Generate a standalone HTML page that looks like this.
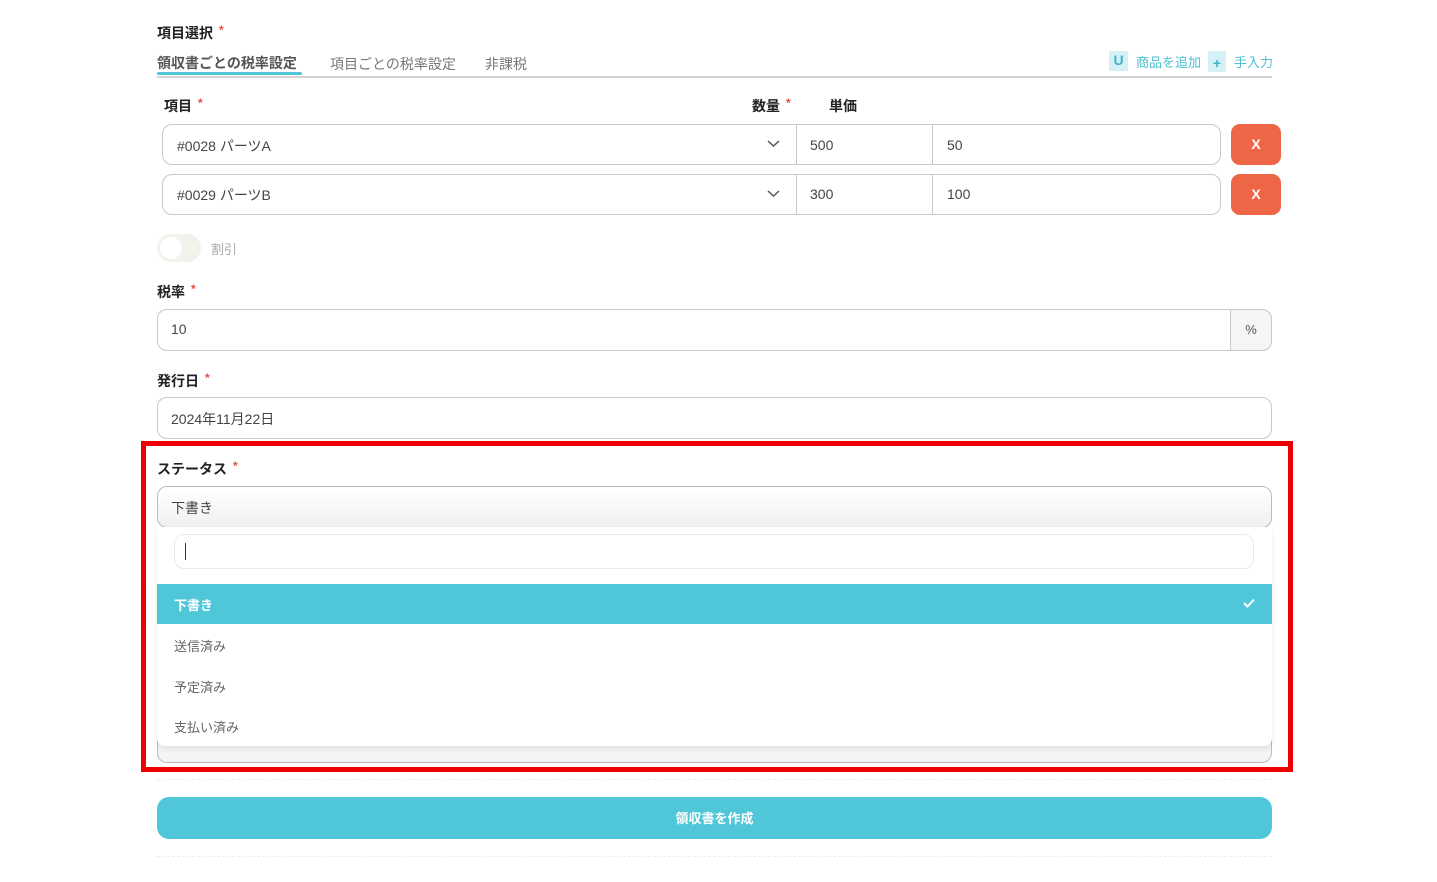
<!DOCTYPE html>
<html><head><meta charset="utf-8"><style>
*{box-sizing:border-box;margin:0;padding:0}
body{width:1437px;height:882px;background:#fff;font-family:"Liberation Sans","Noto Sans CJK JP",sans-serif;color:#333;position:relative;overflow:hidden;font-size:14px}
.a{position:absolute}
.lbl{font-weight:bold;font-size:14px;color:#222}
.req{color:#e74c3c;font-size:12px;margin-left:6px;vertical-align:top}
.box{border:1px solid #c8c8c8;border-radius:10px;background:#fff}
.t{font-size:14px;color:#444}
.xb{background:#ef6646;color:#fff;border-radius:9px;font-weight:bold;text-align:center;line-height:41px;width:50px;height:41px;font-size:14px}
</style></head><body>
<div class="a lbl" style="left:157px;top:23px">項目選択<span class="req">*</span></div>
<div class="a" style="left:157px;top:53px;font-size:14px;color:#555;font-weight:bold">領収書ごとの税率設定</div>
<div class="a" style="left:330px;top:54px;font-size:14px;color:#777">項目ごとの税率設定</div>
<div class="a" style="left:485px;top:54px;font-size:14px;color:#777">非課税</div>
<div class="a" style="left:157px;top:76px;width:1115px;height:2px;background:#d5d5d5"></div>
<div class="a" style="left:157px;top:72px;width:145px;height:3px;background:#4fc7d8;border-radius:2px"></div>
<div class="a" style="left:1109px;top:51px;width:19px;height:20px;background:#d6f1f5;color:#3bb5c9;font-weight:bold;text-align:center;line-height:18px">U</div>
<div class="a" style="left:1136px;top:52px;font-size:13px;color:#4fbfd0">商品を追加</div>
<div class="a" style="left:1208px;top:51px;width:18px;height:21px;background:#d6f1f5;color:#3bb5c9;font-weight:bold;text-align:center;line-height:24px">+</div>
<div class="a" style="left:1234px;top:52px;font-size:13px;color:#4fbfd0">手入力</div>

<div class="a lbl" style="left:164px;top:96px">項目<span class="req">*</span></div>
<div class="a lbl" style="left:752px;top:96px">数量<span class="req">*</span></div>
<div class="a lbl" style="left:829px;top:96px">単価</div>

<div class="a box" style="left:162px;top:124px;width:1059px;height:41px"></div>
<div class="a" style="left:796px;top:124px;width:1px;height:41px;background:#c8c8c8"></div>
<div class="a" style="left:932px;top:124px;width:1px;height:41px;background:#c8c8c8"></div>
<div class="a t" style="left:177px;top:136px">#0028 パーツA</div>
<div class="a t" style="left:810px;top:137px">500</div>
<div class="a t" style="left:947px;top:137px">50</div>
<svg class="a" style="left:767px;top:139px" width="13" height="9"><path d="M1 2l5.5 5 5.5-5" fill="none" stroke="#555" stroke-width="1.5"/></svg>
<div class="a xb" style="left:1231px;top:124px">X</div>

<div class="a box" style="left:162px;top:174px;width:1059px;height:41px"></div>
<div class="a" style="left:796px;top:174px;width:1px;height:41px;background:#c8c8c8"></div>
<div class="a" style="left:932px;top:174px;width:1px;height:41px;background:#c8c8c8"></div>
<div class="a t" style="left:177px;top:185px">#0029 パーツB</div>
<div class="a t" style="left:810px;top:186px">300</div>
<div class="a t" style="left:947px;top:186px">100</div>
<svg class="a" style="left:767px;top:189px" width="13" height="9"><path d="M1 2l5.5 5 5.5-5" fill="none" stroke="#555" stroke-width="1.5"/></svg>
<div class="a xb" style="left:1231px;top:174px">X</div>

<div class="a" style="left:157px;top:234px;width:44px;height:28px;border-radius:14px;background:#f3f1ec"></div>
<div class="a" style="left:160px;top:237px;width:22px;height:22px;border-radius:11px;background:#fff"></div>
<div class="a" style="left:211px;top:239px;font-size:13px;color:#aaa">割引</div>

<div class="a lbl" style="left:157px;top:282px">税率<span class="req">*</span></div>
<div class="a box" style="left:157px;top:309px;width:1115px;height:42px"></div>
<div class="a" style="left:1230px;top:309px;width:42px;height:42px;background:#f5f5f5;border:1px solid #c8c8c8;border-radius:0 10px 10px 0;text-align:center;line-height:40px;font-size:13px;color:#555">%</div>
<div class="a t" style="left:171px;top:321px">10</div>

<div class="a lbl" style="left:157px;top:371px">発行日<span class="req">*</span></div>
<div class="a box" style="left:157px;top:397px;width:1115px;height:42px"></div>
<div class="a t" style="left:171px;top:409px">2024年11月22日</div>

<div class="a lbl" style="left:157px;top:459px">ステータス<span class="req">*</span></div>
<div class="a" style="left:157px;top:486px;width:1115px;height:42px;border:1px solid #bbb;border-radius:10px;background:linear-gradient(#fff,#f0f0f0)"></div>
<div class="a t" style="left:171px;top:498px">下書き</div>
<div class="a" style="left:157px;top:720px;width:1115px;height:43px;border:1px solid #bbb;border-radius:10px;background:#f4f4f4"></div>
<div class="a" style="left:157px;top:527px;width:1115px;height:219px;background:#fff;border-radius:0 0 8px 8px;box-shadow:0 3px 6px rgba(0,0,0,.08)"></div>
<div class="a" style="left:174px;top:534px;width:1080px;height:35px;border:1px solid #eee9e2;border-radius:10px"></div>
<div class="a" style="left:185px;top:543px;width:1px;height:17px;background:#333"></div>
<div class="a" style="left:157px;top:584px;width:1115px;height:40px;background:#4fc7d8"></div>
<div class="a" style="left:174px;top:595px;font-size:13px;color:#fff;font-weight:bold">下書き</div>
<svg class="a" style="left:1243px;top:598px" width="12" height="10"><path d="M1 5l3.5 3.5L11 1.5" fill="none" stroke="#fff" stroke-width="2"/></svg>
<div class="a" style="left:174px;top:636px;font-size:13px;color:#666">送信済み</div>
<div class="a" style="left:174px;top:677px;font-size:13px;color:#666">予定済み</div>
<div class="a" style="left:174px;top:717px;font-size:13px;color:#666">支払い済み</div>

<div class="a" style="left:141px;top:441px;width:1152px;height:331px;border:5px solid #ee0000"></div>

<div class="a" style="left:157px;top:779px;width:1115px;border-top:1px dashed #eee"></div>
<div class="a" style="left:157px;top:797px;width:1115px;height:42px;border-radius:12px;background:#4fc7d8;color:#fff;font-weight:bold;font-size:13px;text-align:center;line-height:44px">領収書を作成</div>
<div class="a" style="left:157px;top:856px;width:1115px;border-top:1px dashed #eee"></div>
</body></html>
